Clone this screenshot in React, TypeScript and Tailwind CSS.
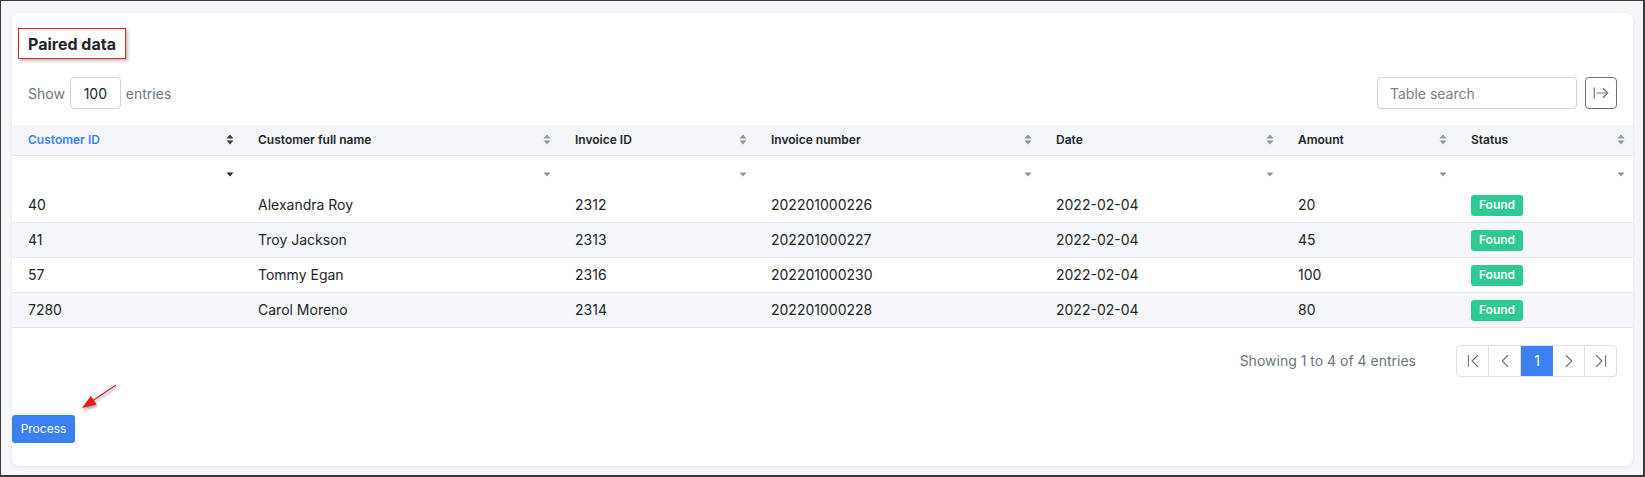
import { ArrowRightFromLine, ChevronFirst, ChevronLast, ChevronLeft, ChevronRight } from 'lucide-react'

const columns = [
  { label: 'Customer ID', width: 'w-[230px]', active: true },
  { label: 'Customer full name', width: 'w-[317px]' },
  { label: 'Invoice ID', width: 'w-[196px]' },
  { label: 'Invoice number', width: 'w-[285px]' },
  { label: 'Date', width: 'w-[242px]' },
  { label: 'Amount', width: 'w-[173px]' },
  { label: 'Status', width: 'w-[178px]' },
]

const rows = [
  { id: '40', name: 'Alexandra Roy', invoiceId: '2312', invoiceNumber: '202201000226', date: '2022-02-04', amount: '20' },
  { id: '41', name: 'Troy Jackson', invoiceId: '2313', invoiceNumber: '202201000227', date: '2022-02-04', amount: '45' },
  { id: '57', name: 'Tommy Egan', invoiceId: '2316', invoiceNumber: '202201000230', date: '2022-02-04', amount: '100' },
  { id: '7280', name: 'Carol Moreno', invoiceId: '2314', invoiceNumber: '202201000228', date: '2022-02-04', amount: '80' },
]

function SortIcon({ active }: { active?: boolean }) {
  return (
    <svg width="8" height="11" viewBox="0 0 8 11" className={active ? 'text-[#343a40]' : 'text-[#8e949c]'}>
      <path d="M4 0.5 L7.5 4.5 H0.5 Z" fill="currentColor" />
      <path d="M4 10.5 L7.5 6.5 H0.5 Z" fill="currentColor" />
    </svg>
  )
}

function Caret({ active }: { active?: boolean }) {
  return (
    <svg width="8" height="5" viewBox="0 0 8 5" className={active ? 'text-[#212529]' : 'text-[#8e949c]'}>
      <path d="M0.5 0.5 H7.5 L4 4.5 Z" fill="currentColor" />
    </svg>
  )
}

export default function App() {
  return (
    <div
      className="box-border h-[477px] w-[1645px] border-t border-l border-r-2 border-b-2 border-[#3a3a3a] bg-[#f5f6fa] pl-[11px] pt-[12px]"
      style={{ fontFamily: 'Inter, "Noto Sans", sans-serif' }}
    >
      <div className="relative h-[453px] w-[1621px] rounded-lg bg-white shadow-[0_1px_3px_rgba(0,0,0,0.08)]">
        <div className="pl-[6px] pt-[15px]">
          <div className="flex h-[31px] w-[108px] items-center border border-[#e02424] pl-[9px] text-[16px] font-bold text-[#212529] shadow-[2px_2px_3px_rgba(0,0,0,0.25)]">
            Paired data
          </div>
        </div>

        <div className="mt-[18px] flex items-center justify-between px-4">
          <div className="flex items-center gap-[5px] text-[14px] text-[#6c757d]">
            <span>Show</span>
            <div className="flex h-8 w-[51px] items-center justify-center rounded border border-[#ced4da] text-[#212529]">100</div>
            <span>entries</span>
          </div>
          <div className="flex items-center gap-2">
            <div className="flex h-8 w-[200px] items-center rounded border border-[#ced4da] px-3 text-[14px] text-[#7a8189]">
              Table search
            </div>
            <div className="flex h-8 w-8 items-center justify-center rounded border border-[#6c757d] text-[#6c757d]">
              <ArrowRightFromLine size={18} strokeWidth={1.5} />
            </div>
          </div>
        </div>

        <table className="mt-4 w-full table-fixed border-collapse text-left">
          <colgroup>
            {columns.map((c) => (
              <col key={c.label} className={c.width} />
            ))}
          </colgroup>
          <thead>
            <tr className="h-[30px] border-b border-[#e3e6ea] bg-[#f5f6fa]">
              {columns.map((c) => (
                <th key={c.label} className="p-0 font-semibold">
                  <div className="flex items-center justify-between pl-4 pr-[8px] text-[12px]">
                    <span className={c.active ? 'text-[#3d82f0]' : 'text-[#212529]'}>{c.label}</span>
                    <SortIcon active={c.active} />
                  </div>
                </th>
              ))}
            </tr>
            <tr className="h-[32px]">
              {columns.map((c) => (
                <th key={c.label} className="p-0">
                  <div className="flex justify-end pr-[8px] pt-[6px]">
                    <Caret active={c.active} />
                  </div>
                </th>
              ))}
            </tr>
          </thead>
          <tbody className="text-[14px] text-[#212529]">
            {rows.map((r, i) => (
              <tr key={r.id} className={`h-[35px] border-b border-[#e3e6ea] ${i % 2 === 1 ? 'bg-[#f6f7fa]' : 'bg-white'}`}>
                <td className="pl-4">{r.id}</td>
                <td className="pl-4">{r.name}</td>
                <td className="pl-4">{r.invoiceId}</td>
                <td className="pl-4">{r.invoiceNumber}</td>
                <td className="pl-4">{r.date}</td>
                <td className="pl-4">{r.amount}</td>
                <td className="pl-4">
                  <span className="inline-flex h-[21px] w-[52px] items-center justify-center rounded-[3px] bg-[#2dcb93] text-[12px] font-semibold text-white">
                    Found
                  </span>
                </td>
              </tr>
            ))}
          </tbody>
        </table>

        <div className="mt-[17px] flex items-center justify-end gap-[40px] px-4">
          <span className="text-[14px] text-[#6c757d]">Showing 1 to 4 of 4 entries</span>
          <div className="flex h-8 overflow-hidden rounded border border-[#dee2e6] text-[#6c757d]">
            <div className="flex w-8 items-center justify-center border-r border-[#dee2e6]">
              <ChevronFirst size={22} strokeWidth={1.2} />
            </div>
            <div className="flex w-8 items-center justify-center border-r border-[#dee2e6]">
              <ChevronLeft size={22} strokeWidth={1.2} />
            </div>
            <div className="flex w-8 items-center justify-center bg-[#3b7ff0] text-[14px] text-white">1</div>
            <div className="flex w-8 items-center justify-center border-r border-[#dee2e6]">
              <ChevronRight size={22} strokeWidth={1.2} />
            </div>
            <div className="flex w-[31px] items-center justify-center">
              <ChevronLast size={22} strokeWidth={1.2} />
            </div>
          </div>
        </div>

        <div className="mt-[38px]">
          <div className="flex h-7 w-[63px] items-center justify-center rounded-[3px] bg-[#3a80f5] text-[12px] text-white">
            Process
          </div>
        </div>

        <svg
          className="absolute left-[60px] top-[360px] drop-shadow-[1px_2px_1px_rgba(0,0,0,0.35)]"
          width="60"
          height="45"
          viewBox="0 0 60 45"
        >
          <line x1="44" y1="12" x2="21" y2="27.5" stroke="#e81818" strokeWidth="1.2" />
          <polygon points="10,35 24.6,31.6 18.8,23" fill="#e81818" />
        </svg>
      </div>
    </div>
  )
}
